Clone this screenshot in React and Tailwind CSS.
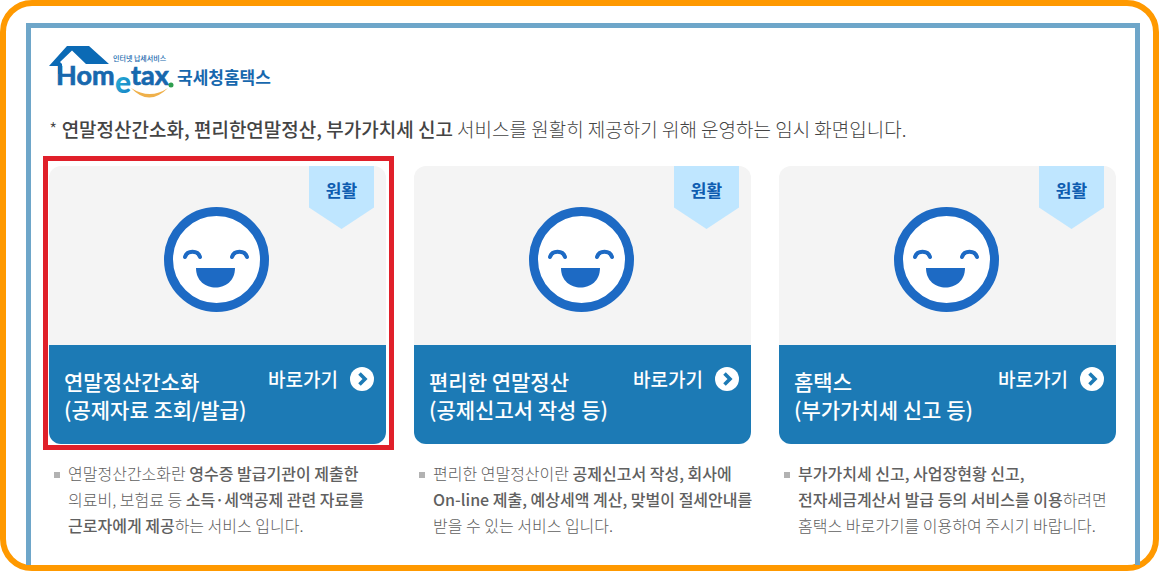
const services = [
  {
    id: 'simplified',
    title: ['연말정산간소화', '(공제자료 조회/발급)'],
    status: '원활',
    highlighted: true,
    description: (
      <>
        연말정산간소화란 <strong className="font-medium">영수증 발급기관이 제출한</strong>
        <br />
        의료비, 보험료 등 <strong className="font-medium">소득·세액공제 관련 자료를</strong>
        <br />
        <strong className="font-medium">근로자에게 제공</strong>하는 서비스 입니다.
      </>
    ),
  },
  {
    id: 'convenient',
    title: ['편리한 연말정산', '(공제신고서 작성 등)'],
    status: '원활',
    highlighted: false,
    description: (
      <>
        편리한 연말정산이란 <strong className="font-medium">공제신고서 작성, 회사에</strong>
        <br />
        <strong className="font-medium">On-line 제출, 예상세액 계산, 맞벌이 절세안내를</strong>
        <br />
        받을 수 있는 서비스 입니다.
      </>
    ),
  },
  {
    id: 'hometax',
    title: ['홈택스', '(부가가치세 신고 등)'],
    status: '원활',
    highlighted: false,
    description: (
      <>
        <strong className="font-medium">부가가치세 신고, 사업장현황 신고,</strong>
        <br />
        <strong className="font-medium">전자세금계산서 발급 등의 서비스를 이용</strong>하려면
        <br />
        홈택스 바로가기를 이용하여 주시기 바랍니다.
      </>
    ),
  },
];

function Logo() {
  return (
    <svg width="224" height="54" viewBox="0 0 224 54" role="img" aria-label="Hometax 국세청홈택스">
      <defs>
        <linearGradient id="logoE" x1="0" y1="0" x2="1" y2="1">
          <stop offset="0" stopColor="#2cc0dc" />
          <stop offset="1" stopColor="#1579c2" />
        </linearGradient>
      </defs>
      {/* Roof, its left wall runs into the H */}
      <path d="M0 20 L18 0 H40 L60 18 H37 L23 4.5 L11 16 L13 18 V28 H9 V20 Z" fill="#0b6ab5" />
      <g fontFamily="Lato, sans-serif" fontWeight="700" fontSize="27" fill="#1768ae" stroke="#1768ae" strokeWidth="0.7">
        <text x="7" y="39">Hom</text>
        <text x="82" y="39">tax</text>
      </g>
      <text x="66" y="47" fontFamily="Lato, sans-serif" fontWeight="900" fontSize="30" fill="url(#logoE)">e</text>
      <circle cx="122" cy="39" r="2.5" fill="#2f9e4f" />
      {/* Smile */}
      <path d="M82 42 Q100 61 119 42 Q101 54 82 42 Z" fill="#efb04a" />
      <g fontFamily="'Noto Sans CJK KR', sans-serif" fill="#1768ae">
        <text x="64" y="15" fontSize="7" fontWeight="500">인터넷 납세서비스</text>
        <text x="128" y="38" fontSize="17" fontWeight="700">국세청홈택스</text>
      </g>
    </svg>
  );
}

function Smiley() {
  return (
    <svg width="105" height="105" viewBox="0 0 105 105" aria-hidden="true">
      <circle cx="52.5" cy="52.5" r="48" fill="#fff" stroke="#1d6ac4" strokeWidth="9" />
      <path
        d="M21 50 C23 43 34 43 36 50 M68 50 C70 43 81 43 83 50"
        fill="none"
        stroke="#1d6ac4"
        strokeWidth="4"
        strokeLinecap="round"
      />
      <path d="M32 61 H71 C71 87 32 87 32 61 Z" fill="#1d6ac4" />
    </svg>
  );
}

function ArrowIcon() {
  return (
    <svg width="24" height="24" viewBox="0 0 24 24" aria-hidden="true">
      <circle cx="12" cy="12" r="12" fill="#fff" />
      <path d="M9.5 6.5 L15 12 L9.5 17.5" fill="none" stroke="#1c7ab5" strokeWidth="3.6" />
    </svg>
  );
}

function ServiceCard({ service }) {
  return (
    <section>
      <div className="relative">
        <div className="overflow-hidden rounded-xl">
          <div className="relative flex justify-center bg-[#f4f4f4] pt-[41px] pr-[3px] pb-[33px]">
            <Smiley />
            {/* Status ribbon */}
            <span className="absolute top-0 right-3 h-[63px] w-[65px] bg-[#bfe6ff] pt-3 text-center text-[17px] leading-6 font-bold text-[#0d5cb0] [clip-path:polygon(0_0,100%_0,100%_66%,50%_100%,0_66%)]">
              {service.status}
            </span>
          </div>
          <div className="flex items-start justify-between bg-[#1c7ab5] pt-[22px] pr-3 pb-[21px] pl-[15px] text-white">
            <h2 className="text-[21px] leading-7 font-medium whitespace-nowrap">
              {service.title[0]}
              <br />
              {service.title[1]}
            </h2>
            <a href={`#${service.id}`} className="-ml-12 flex items-center gap-3 text-[19px] leading-5 font-medium whitespace-nowrap">
              바로가기
              <ArrowIcon />
            </a>
          </div>
        </div>
        {service.highlighted && (
          <div className="pointer-events-none absolute -top-2.5 -right-2 -bottom-1.5 -left-1.5 border-5 border-[#e0202a]"></div>
        )}
      </div>
      <div className="mt-4 flex gap-2 pl-1 text-[#606060]">
        <span className="mt-3 ml-px size-1.5 shrink-0 bg-[#b2b2b2]"></span>
        <p className="text-base leading-[26px] font-light whitespace-nowrap">{service.description}</p>
      </div>
    </section>
  );
}

function App() {
  return (
    <div className="flex min-h-screen flex-col rounded-[32px] border-6 border-[#ff9900] bg-white pt-[17px] pr-[13px] pl-5 font-['Noto_Sans_CJK_KR',sans-serif]">
      <main className="grow border-5 border-b-0 border-[#6ea6c9] pt-[18px] pr-[19px] pl-[18px]">
        <h1>
          <Logo />
        </h1>
        <p className="mt-[15px] text-[19px] leading-7 font-light text-[#444]">
          * <strong className="font-medium">연말정산간소화, 편리한연말정산, 부가가치세 신고</strong> 서비스를 원활히 제공하기 위해 운영하는 임시 화면입니다.
        </p>
        <div className="mt-[23px] grid grid-cols-3 gap-7">
          {services.map(service => (
            <ServiceCard key={service.id} service={service} />
          ))}
        </div>
      </main>
    </div>
  );
}

export default App;
